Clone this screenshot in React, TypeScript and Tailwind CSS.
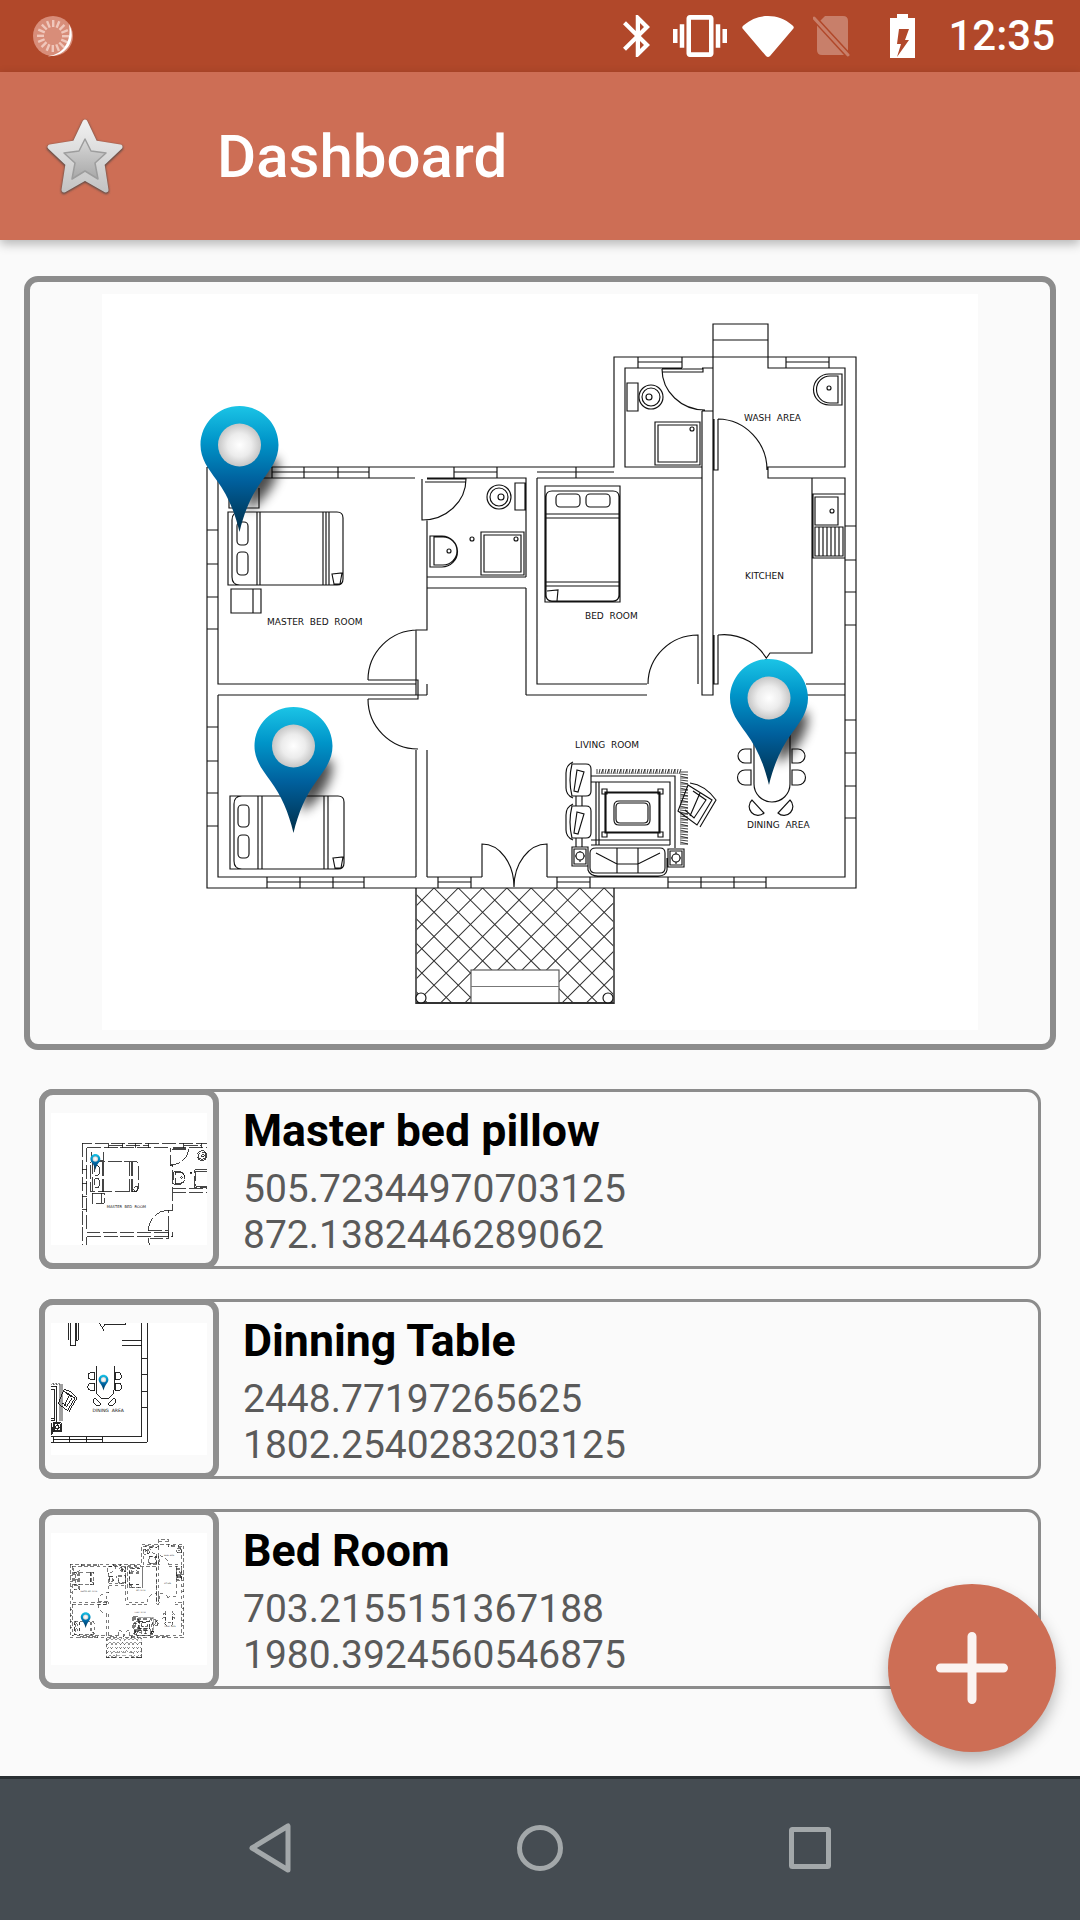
import React from 'react';

const LINES = [
  // outer shell, left wing
  'M207 467V888H856V357H614V467H207',
  'M218 478V684H416V630H427V520H422V479',
  'M218 478H415M427 478H526V577M427 577H526M427 588H526M526 588V695',
  'M218 695H427M416 695V684M427 684V695M427 750V877M416 750V877',
  'M218 695V877H416M427 877H482M547 877H845V684H806M806 695H845',
  // bed room + central wall
  'M537 478V684H647M526 695H647M537 478H702V635M702 411V695H713V411H702',
  'M702 467H625V368H682M638 368V357M682 368V357M702 368H713V324H768V368H845V467H768V478H845V684',
  'M713 340H768M713 368V411M786 368V357M829 368V357',
  'M812 478V653H770L765 660',
  // windows
  'M207 530H218M207 564H218M207 597H218M207 629H218',
  'M207 727H218M207 761H218M207 793H218M207 826H218',
  'M272 467V478M304 467V478M338 467V478M369 467V478M272 472H369',
  'M454 467V478M497 467V478M454 472H497M537 472H614M576 467V478',
  'M638 362H682M786 362H829',
  'M845 526H856M845 560H856M845 592H856M845 625H856',
  'M845 720H856M845 753H856M845 786H856M845 818H856',
  'M267 877V888M300 877V888M333 877V888M364 877V888M267 882H364',
  'M438 877V888M471 877V888M438 882H471M557 877V888M590 877V888M557 882H590',
  'M668 877V888M701 877V888M734 877V888M766 877V888M668 882H766',
  // doors
  'M368 680A50 50 0 0 1 418 630M368 680H418V699H368M368 699A50 50 0 0 0 418 749',
  'M427 479H466A44 41 0 0 1 422 520M425 482H466',
  'M648 684A50 49 0 0 1 698 635V684M718 419A50 51 0 0 1 767 470M714 419V470H718V419',
  'M718 635A50 50 0 0 1 770 665M714 635V684H718V635',
  'M662 369A43 41 0 0 0 705 410M662 369H703V372H662',
  'M482 877V844A32 43 0 0 1 514 887M547 877V844A33 43 0 0 0 514 887',
  // master bed
  'M228 512H337Q343 512 343 518V579Q343 585 337 585H228ZM240 512Q232 512 232 520V577Q232 585 240 585',
  'M257 512V585M260 512V585M323 512V585M326 512V585M329 512V585M332 574L342 573L340 584H334Z',
  'M231 589H261V613H231ZM253 589V613M229 488V508H259V488',
  // bed room bed
  'M545 486H620V602H545ZM552 491H613Q619 491 619 497V595Q619 601 613 601H552Q546 601 546 595V497Q546 491 552 491',
  'M546 514H619M546 518H619M546 582H619M546 586H619M547 591L558 590L557 601',
  // lower bed
  'M230 796H338Q344 796 344 802V863Q344 869 338 869H230ZM242 796Q234 796 234 804V861Q234 869 242 869',
  'M258 796V869M262 796V869M324 796V869M328 796V869M333 858L343 857L341 868H335Z',
  // bath fittings
  'M655 422H700V465H655ZM658 425H697V462H658ZM627 383H638V411H627ZM515 483H525V510H515Z',
  'M481 532H524V575H481ZM484 535H521V572H484Z',
  'M430 536H442A15 15 0 0 1 442 567H430Z M434 537H443A13 13 0 0 1 443 565H434Z',
  'M842 374H829A15 15 0 0 0 829 405H842ZM838 376H830A13 13 0 0 0 830 403H838Z',
  // sink
  'M813 494H845V558H813ZM815 497H838V525H815ZM815 527H843V556H815ZM819 527V556M823 527V556M827 527V556M831 527V556M835 527V556M839 527V556',
  // dining
  'M754 735V784A18 18 0 0 0 790 784V735',
  'M751 749H745A7 7 0 0 0 745 763H751ZM751 770H745A7 7 0 0 0 745 785H751ZM792 749H798A7 7 0 0 1 798 763H792ZM792 770H798A7 7 0 0 1 798 785H792Z',
  'M752 800A8 8 0 1 0 764 813ZM790 800A8 8 0 1 1 778 813Z',
  // living room chairs
  'M572 764H586Q591 764 591 769V791Q591 796 586 796H572Q568 780 572 764ZM566 773Q566 765 573 762M566 773V788Q566 795 573 798M577 770L584 772L578 792L574 791Z',
  'M572 806H586Q591 806 591 811V833Q591 838 586 838H572Q568 822 572 806ZM566 815Q566 807 573 804M566 815V830Q566 837 573 840M577 812L584 814L578 834L574 833Z',
  'M576 796V806M582 796V806M576 838V847M582 838V847',
  // carpet
  'M591 776H675V848M591 782H670V845M591 840H670M591 845H670M596 782V845M599 782V845',
  'M605 792H660V833H605ZM606 793H659V832H606ZM602 789H607V794H602ZM658 789H663V794H658ZM602 832H607V837H602ZM658 832H663V837H658Z',
  'M619 801H645Q650 801 650 806V820Q650 825 645 825H619Q614 825 614 820V806Q614 801 619 801ZM620 803H644Q648 803 648 807V819Q648 823 644 823H620Q616 823 616 819V807Q616 803 620 803Z',
  // side tables + sofa
  'M572 847H588V866H572ZM574 849H586V864H574ZM668 849H684V867H668ZM670 851H682V865H670Z',
  'M580 851V862M575 856H585M676 852V864M671 858H681',
  'M596 848H660Q665 848 665 853V868Q665 873 660 873H596Q590 873 590 868V853Q590 848 596 848ZM617 848V873M638 848V873M596 853L617 864L638 864L660 853',
  'M588 858V870Q590 876 598 876H658Q666 876 667 870V858',
  // armchair
  'M688 785L712 800L697 825L678 811ZM693 791L706 800L694 818L685 810M700 793L690 816',
  'M690 783Q705 785 716 800L700 827',
];

const LABELS: [string, number, number][] = [
  ['MASTER  BED  ROOM', 267, 625],
  ['BED  ROOM', 585, 619],
  ['WASH  AREA', 744, 421],
  ['KITCHEN', 745, 579],
  ['LIVING  ROOM', 575, 748],
  ['DINING  AREA', 747, 828],
];

const CIRCLES: [number, number, number][] = [
  [651, 397, 12], [651, 397, 9], [649, 397, 3], [692, 429, 2],
  [499, 497, 12], [499, 497, 9], [501, 497, 3], [472, 539, 2], [516, 539, 2],
  [449, 551, 2], [829, 388, 2], [832, 511, 2], [580, 856, 4], [676, 858, 4],
];

// hatch of the front porch, pairs of lines meet on the top edge
const hatch = Array.from({ length: 19 }, (_, i) => {
  const x = 288.2 + i * 24.3;
  return `M${x} 888L${x + 120} 1008M${x} 888L${x - 120} 1008`;
}).join('');

const fringe = Array.from({ length: 42 }, (_, i) => `M${597 + i * 2} 774l${i % 3} -5`).join('');
const fringeSide = Array.from({ length: 37 }, (_, i) => `M680 ${772 + i * 2}l8 ${i % 3}`).join('');

function Plan({ sw = 1.15, dash, only }: { sw?: number; dash?: string; only?: string[] }) {
  const labels = only ? LABELS.filter(([label]) => only.includes(label)) : LABELS;
  return (
    <g fill="none" stroke="#111" strokeWidth={sw} strokeDasharray={dash}>
      <path d={hatch} clipPath="url(#porch)" strokeWidth={sw * 0.9} stroke="#333" />
      <path d="M416 888V1003H614V888" stroke="#555" strokeWidth={sw * 1.6} />
      <rect x="471" y="970" width="88" height="33" fill="#fff" stroke="#555" />
      <path d="M471 986.5H559" stroke="#777" />
      <circle cx="421" cy="998" r="5" fill="#fff" />
      <circle cx="608" cy="998" r="5" fill="#fff" />
      <path d="M416 1003H614" />
      <path d={LINES.join('')} />
      <path d={fringe + fringeSide} strokeWidth="0.8" />
      <rect x="237" y="522" width="11" height="23" rx="4" />
      <rect x="237" y="552" width="11" height="23" rx="4" />
      <rect x="238" y="805" width="11" height="22" rx="4" />
      <rect x="238" y="835" width="11" height="23" rx="4" />
      <rect x="556" y="494" width="24" height="13" rx="4" />
      <rect x="586" y="494" width="24" height="13" rx="4" />
      {CIRCLES.map(([cx, cy, r], i) => (
        <circle key={i} cx={cx} cy={cy} r={r} fill="#fff" />
      ))}
      {labels.map(([label, x, y]) => (
        <text key={label} x={x} y={y} fill="#111" stroke="none" fontSize="9" fontFamily="DejaVu Sans" xmlSpace="preserve">
          {label}
        </text>
      ))}
    </g>
  );
}

const PIN =
  'M0-39C21.5-39 39-21.5 39 0C39 14 31 24 23 35C12 50 5 66 0 87C-5 66-12 50-23 35C-31 24-39 14-39 0C-39-21.5-21.5-39 0-39Z';

function Pin({ x, y, scale = 1, shadow = true }: { x: number; y: number; scale?: number; shadow?: boolean }) {
  // x, y is the tip of the pin
  return (
    <g transform={`translate(${x} ${y}) scale(${scale}) translate(0 -87)`}>
      {shadow && <path d="M6 12L38 14C42 30 30 52 8 66Z" fill="#000" opacity="0.7" filter="url(#pinBlur)" />}
      <path d={PIN} fill="url(#pinBody)" />
      <circle r="21.5" fill="url(#pinBall)" />
    </g>
  );
}

type ThumbProps = { view: string; x: number; y: number; scale: number; sw: number; dash?: string; only: string[] };

function Thumb({ view, x, y, scale, sw, dash, only }: ThumbProps) {
  return (
    <div className="w-[180px] h-[180px] shrink-0 border-[6px] border-[#8f8f8f] rounded-[14px] -m-[3px] flex items-center justify-center bg-[#fafafa]">
      <svg viewBox={view} className="w-[156px] h-[132px] bg-white" shapeRendering="crispEdges" preserveAspectRatio="none">
        <Plan sw={sw} dash={dash} only={only} />
        <g shapeRendering="auto">
          <Pin x={x} y={y} scale={scale} shadow={false} />
        </g>
      </svg>
    </div>
  );
}

const ITEMS = [
  { title: 'Master bed pillow', a: '505.72344970703125', b: '872.1382446289062', view: '131 393 380 322', x: 239, y: 532, s: 0.31, sw: 1.9, dash: '34 7', only: ['MASTER  BED  ROOM'] },
  { title: 'Dinning Table', a: '2448.77197265625', b: '1802.2540283203125', view: '664 650 312 264', x: 769, y: 785, s: 0.25, sw: 1.8, only: ['DINING  AREA'] },
  { title: 'Bed Room', a: '703.2155151367188', b: '1980.3924560546875', view: '98 289 891 754', x: 296, y: 832, s: 0.72, sw: 3.2, dash: '20 15', only: LABELS.map(([label]) => label) },
];

const TICKS = Array.from({ length: 16 }, (_, i) => i * 22.5);

function StatusBar() {
  return (
    <div className="h-[72px] shrink-0 bg-[#b1482a] flex items-center pl-[33px] pr-[25px]">
      <svg width="42" height="43" viewBox="0 0 42 43">
        <circle cx="20" cy="21" r="20" fill="#d88d79" />
        {TICKS.map((deg) => (
          <rect key={deg} x="19" y="5" width="2.4" height="7" fill="#f0c7bb" transform={`rotate(${deg} 20 21)`} />
        ))}
        <path d="M36 9C44 24 34 43 13 41C30 41 39 26 36 9Z" fill="#fff" />
      </svg>
      <div className="flex-1" />
      <svg width="27" height="42" viewBox="5 2 12.71 20" preserveAspectRatio="none" className="mr-[23px]" fill="#fff">
        <path d="M17.71 7.71L12 2h-1v7.59L6.41 5 5 6.41 10.59 12 5 17.59 6.41 19 11 14.41V22h1l5.71-5.71-4.3-4.29 4.3-4.29zM13 5.83l1.88 1.88L13 9.59V5.83zm1.88 10.46L13 18.17v-3.76l1.88 1.88z" />
      </svg>
      <svg width="54" height="42" viewBox="0 3 24 18" preserveAspectRatio="none" className="mr-[15px]" fill="#fff">
        <path d="M0 15h2V9H0v6zm3 2h2V7H3v10zm19-8v6h2V9h-2zm-3 8h2V7h-2v10zM16.5 3h-9C6.67 3 6 3.67 6 4.5v15c0 .83.67 1.5 1.5 1.5h9c.83 0 1.5-.67 1.5-1.5v-15c0-.83-.67-1.5-1.5-1.5zM16 19H8V5h8v14z" />
      </svg>
      <svg width="52" height="41" viewBox="0 0 52 41" className="mr-[19px]" fill="#fff">
        <path d="M24 40L1 13Q-1 11 2 9C9 3 17 0 26 0C35 0 43 3 50 9Q53 11 51 13L28 40Q26 42 24 40Z" />
      </svg>
      <svg width="38" height="42" viewBox="0 0 38 42" className="mr-[39px]">
        <path d="M12 1H30Q35 1 35 6V40H9Q4 40 4 35V9Z" fill="#fff" fillOpacity="0.3" />
        <path d="M1 3L35 40" stroke="#b1482a" strokeWidth="6" />
        <path d="M1 3L35 40" stroke="#fff" strokeOpacity="0.3" strokeWidth="3" strokeLinecap="round" />
      </svg>
      <svg width="25" height="44" viewBox="0 0 25 44" className="mr-[33px]">
        <path d="M7 0H18V4H25V44H0V4H7Z" fill="#fff" />
        <path d="M9 15H19L15 26H19L7 43L11 30H7Z" fill="#b1482a" />
      </svg>
      <span className="text-[42px] font-medium text-white leading-[50px]">12:35</span>
    </div>
  );
}

function Star() {
  return (
    <svg width="82" height="80" viewBox="0 0 82 80" className="ml-[44px]">
      <defs>
        <linearGradient id="starOuter" x1="0" y1="0" x2="0" y2="1">
          <stop offset="0" stopColor="#efefef" />
          <stop offset="1" stopColor="#c4c4c4" />
        </linearGradient>
        <linearGradient id="starInner" x1="0" y1="0" x2="0" y2="1">
          <stop offset="0" stopColor="#d8d8d8" />
          <stop offset="1" stopColor="#a8a8a8" />
        </linearGradient>
        <filter id="starBlur" x="-20%" y="-20%" width="140%" height="140%">
          <feGaussianBlur stdDeviation="1.2" />
        </filter>
      </defs>
      <path d="M41 6L51 27L76 31L58 48L62 74L41 62L20 74L24 48L6 31L31 27Z" fill="#5a4a45" stroke="#5a4a45" strokeWidth="6" strokeLinejoin="round" filter="url(#starBlur)" transform="translate(0 1)" />
      <path d="M41 6L51 27L76 31L58 48L62 74L41 62L20 74L24 48L6 31L31 27Z" fill="url(#starOuter)" stroke="url(#starOuter)" strokeWidth="5" strokeLinejoin="round" />
      <path d="M41 23L47 35L62 37L51 47L54 63L41 55L28 63L31 47L20 37L35 35Z" fill="url(#starInner)" stroke="#9d9d9d" strokeWidth="1.5" strokeLinejoin="round" />
    </svg>
  );
}

export default function App() {
  return (
    <div className="relative w-[1080px] h-[1920px] flex flex-col bg-[#fafafa] overflow-hidden font-['Roboto',sans-serif]">
      <StatusBar />

      <div className="relative z-10 h-[168px] shrink-0 bg-[#cd6e55] flex items-center shadow-[0_4px_10px_rgba(0,0,0,0.28)]">
        <Star />
        <span className="ml-[91px] mt-[2px] text-[60px] font-medium text-white leading-[72px]">Dashboard</span>
      </div>

      <main className="flex-1 flex flex-col pt-[36px] px-[24px]">
        <div className="h-[774px] border-[6px] border-[#8c8c8c] rounded-[14px] flex justify-center pt-[12px]">
          <svg viewBox="102 294 876 736" className="w-[876px] h-[736px] bg-white">
            <defs>
              <linearGradient id="pinBody" x1="0" y1="0" x2="0" y2="1">
                <stop offset="0" stopColor="#1bc4e6" />
                <stop offset="0.28" stopColor="#0095c9" />
                <stop offset="0.6" stopColor="#005f9c" />
                <stop offset="1" stopColor="#002f4a" />
              </linearGradient>
              <radialGradient id="pinBall">
                <stop offset="0" stopColor="#ffffff" />
                <stop offset="0.55" stopColor="#ececec" />
                <stop offset="1" stopColor="#c6c6c6" />
              </radialGradient>
              <filter id="pinBlur" x="-60%" y="-60%" width="220%" height="220%">
                <feGaussianBlur stdDeviation="6" />
              </filter>
              <clipPath id="porch">
                <rect x="416" y="888" width="198" height="115" />
              </clipPath>
            </defs>
            <Plan />
            <Pin x={239.5} y={532} />
            <Pin x={293.5} y={833} />
            <Pin x={769} y={785} />
          </svg>
        </div>

        <div className="flex flex-col gap-[30px] mt-[39px] mx-[15px]">
          {ITEMS.map((item) => (
            <div key={item.title} className="h-[180px] border-[3px] border-[#8c8c8c] rounded-[14px] flex items-center bg-[#fafafa]">
              <Thumb view={item.view} x={item.x} y={item.y} scale={item.s} sw={item.sw} dash={item.dash} only={item.only} />
              <div className="ml-[27px] self-start pt-[13px] flex flex-col">
                <span className="text-[44.7px] font-bold text-black leading-[53px]">{item.title}</span>
                <span className="text-[39px] text-[#5a5a5a] leading-[46px] mt-[8px]">{item.a}</span>
                <span className="text-[39px] text-[#5a5a5a] leading-[46px]">{item.b}</span>
              </div>
            </div>
          ))}
        </div>
      </main>

      <button className="absolute left-[888px] top-[1584px] w-[168px] h-[168px] rounded-full bg-[#cd6e55] shadow-[0_8px_16px_rgba(0,0,0,0.28)] flex items-center justify-center">
        <svg width="72" height="72" viewBox="0 0 72 72" stroke="#fbf3f1" strokeWidth="9" strokeLinecap="round">
          <path d="M36 4.5V67.5M4.5 36H67.5" />
        </svg>
      </button>

      <nav className="h-[144px] shrink-0 bg-[#454c52] border-t-[3px] border-[#2a3033] flex items-start">
        <svg width="1080" height="141" viewBox="0 1779 1080 141" fill="none" stroke="#a3a8aa" strokeWidth="5" strokeLinejoin="round">
          <path d="M288 1826V1870L252 1848Z" />
          <ellipse cx="540" cy="1848" rx="20.5" ry="20.5" />
          <rect x="791.5" y="1829.5" width="37" height="37" rx="1" />
        </svg>
      </nav>
    </div>
  );
}
